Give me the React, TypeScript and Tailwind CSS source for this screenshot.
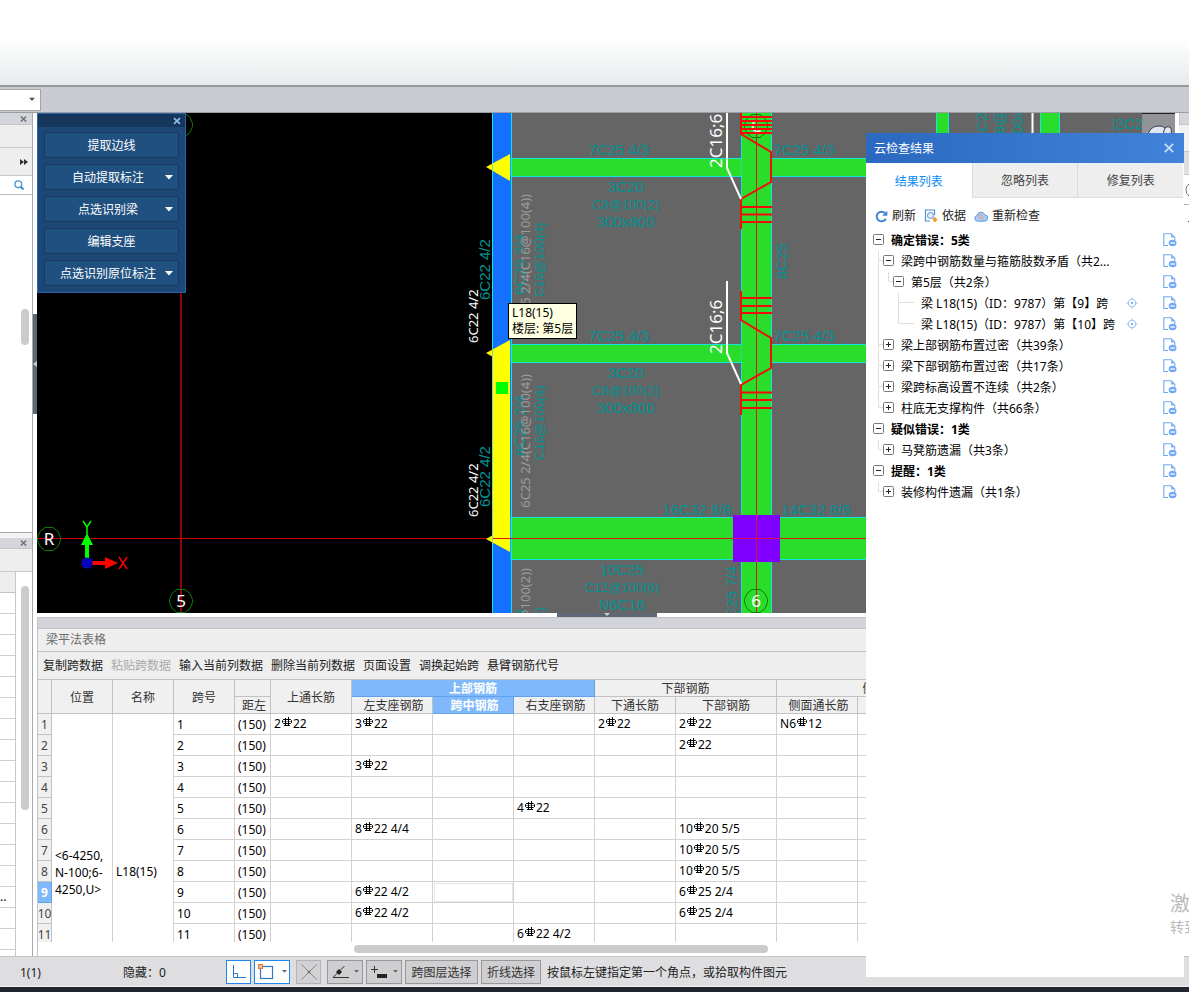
import React from "react";

const sans = "font-['Noto_Sans','Noto_Sans_CJK_SC',sans-serif]";

/* ---------- small icons ---------- */

function Caret({ className = "" }: { className?: string }) {
  return (
    <svg viewBox="0 0 8 5" className={"h-[5px] w-2 shrink-0 " + className} aria-hidden="true">
      <path d="M0 0h8L4 4.6z" fill="currentColor" />
    </svg>
  );
}

function Cross({ className = "" }: { className?: string }) {
  return (
    <svg viewBox="0 0 8 8" className={"h-2 w-2 " + className} aria-hidden="true">
      <path d="M1 1.2 7 6.8M7 1.2 1 6.8" stroke="currentColor" strokeWidth="1.7" fill="none" />
    </svg>
  );
}

function Rebar() {
  return (
    <svg viewBox="0 0 10 10" className="mx-px mb-px inline-block h-[10px] w-[10px] align-baseline" role="img" aria-label="HRB400">
      <g fill="none" stroke="#000" strokeWidth="1">
        <path d="M3.5 1v8M6.5 0v9M2.5 2.5h-1l-1 1v2l1 1h7l1-1v-2l-1-1h-7M2 8.5h6" />
        <path d="M1 4.5h8" strokeWidth="0.5" />
      </g>
    </svg>
  );
}

function FileMinus() {
  return (
    <svg viewBox="0 0 14 14" className="h-[14px] w-[14px]" aria-hidden="true">
      <path d="M5 12.5H.8V.8h7.4l3.6 3.4V7" fill="#fff" stroke="#6ea8f0" strokeWidth="1.1" />
      <path d="M8 1v3.4h3.6z" fill="#7fb1f5" />
      <ellipse cx="9.6" cy="10" rx="3.9" ry="3.2" fill="#6ea8f7" />
      <path d="M7.4 10h4.4" stroke="#fff" strokeWidth="1.3" />
    </svg>
  );
}

function Target() {
  return (
    <svg viewBox="0 0 12 12" className="h-3 w-3" aria-hidden="true">
      <circle cx="6" cy="6" r="3.7" fill="none" stroke="#9cc3f5" strokeWidth="1.1" />
      <circle cx="6" cy="6" r="1.2" fill="#7db0f0" />
      <path d="M6 .4v2.2M6 9.4v2.2M.4 6h2.2M9.4 6h2.2" stroke="#9cc3f5" strokeWidth="1.1" />
    </svg>
  );
}

/* ---------- drawing area ---------- */

function Cad({ x, y, t, up = false, mid = false, end = false, size = 15 }: { x: number; y: number; t: string; up?: boolean; mid?: boolean; end?: boolean; size?: number }) {
  return (
    <text
      x={x}
      y={y}
      fontSize={size}
      fill="#009393"
      textAnchor={mid ? "middle" : end ? "end" : "start"}
      transform={up ? `rotate(-90 ${x} ${y})` : undefined}
      className="font-['Liberation_Sans',sans-serif]"
    >
      {t}
    </text>
  );
}

function Note({ x, y, t, size, fill, end = false }: { x: number; y: number; t: string; size: number; fill: string; end?: boolean }) {
  return (
    <text x={x} y={y} fontSize={size} fill={fill} textAnchor={end ? "end" : "start"} transform={`rotate(-90 ${x} ${y})`} className={sans}>
      {t}
    </text>
  );
}

function Axis({ x, y, t }: { x: number; y: number; t: string }) {
  return (
    <g>
      <path
        d={`M${x - 4} ${y - 11.5}h8l5 4 2.500 6v3l-2.500 6-5 4h-8l-5-4-2.500-6v-3l2.500-6z`}
        fill="none"
        stroke="#0a7d0a"
      />
      <text x={x} y={y + 6} fontSize="17" fill="#fff" textAnchor="middle" className={sans}>
        {t}
      </text>
    </g>
  );
}

function Drawing() {
  const cyan = "#12e6dc";
  return (
    <svg viewBox="37 113 1138 500" preserveAspectRatio="xMinYMin slice" className="block h-full w-full" role="img" aria-label="梁平面图">
      <rect x="37" y="113" width="1138" height="500" fill="#000" />
      <rect x="511" y="113" width="664" height="500" fill="#656565" />
      <path d="M181 113v500" stroke="#8f0008" strokeWidth="2" />
      <path d="M37 538.500h460" stroke="#d40000" />
      <rect x="493" y="113" width="18" height="500" fill="#1470ff" />

      <g fill="#2bdd2b" stroke={cyan}>
        <rect x="511" y="158.500" width="680" height="18" />
        <rect x="511" y="344.500" width="680" height="18" />
        <rect x="511" y="517.500" width="680" height="42" />
        <rect x="741.500" y="100" width="30" height="530" />
        <rect x="936.500" y="100" width="12" height="60" />
        <rect x="1040.500" y="100" width="19" height="60" />
      </g>
      <g fill="#2bdd2b">
        <rect x="735" y="159" width="44" height="17" />
        <rect x="735" y="345" width="44" height="17" />
      </g>
      <path d="M741.500 150v35M771.500 150v35M741.500 336v35M771.500 336v35" stroke={cyan} opacity="0.5" />
      <path d="M1032.500 113v30" stroke="#fff" strokeWidth="2" />

      <path d="M492.500 113v500" stroke={cyan} />
      <path d="M511.500 113v500" stroke={cyan} />
      <g fill="#ffff00">
        <path d="M486 167l24-13v27z" />
        <path d="M486 353l24-13v212l-24-13 7-4V357z" />
      </g>
      <path d="M492.500 162v10M492.500 348v196" stroke="#86d8a8" />
      <rect x="496" y="382" width="12" height="12" fill="#00ff00" />

      <Cad x={619} y={155} t="7C25 4/3" mid />
      <Cad x={804} y={155} t="7C25 4/3" mid />
      <Cad x={626} y={192} t="3C20" mid />
      <Cad x={626} y={209} t="C8@100(2)" mid size={13} />
      <Cad x={626} y={227} t="300x800" mid />
      <Cad x={619} y={341} t="7C25 4/3" mid />
      <Cad x={804} y={341} t="7C25 4/3" mid />
      <Cad x={626} y={378} t="3C20" mid />
      <Cad x={626} y={395} t="C8@100(2)" mid size={13} />
      <Cad x={626} y={413} t="300x800" mid />
      <Cad x={697} y={515} t="16C32 8/8" mid />
      <Cad x={816} y={515} t="14C32 8/6" mid />
      <Cad x={622} y={575} t="10C25" mid />
      <Cad x={622} y={592} t="C12@100(6)" mid size={13} />
      <Cad x={622} y={610} t="N6C16" mid />
      <Cad x={787} y={279} t="8C25" up />
      <Cad x={490} y={300} t="6C22 4/2" up />
      <Cad x={490} y={507} t="6C22 4/2" up />
      <Cad x={525} y={295} t="6C25 2/4" up />
      <Cad x={544} y={297} t="C16@100(4)" up size={13} />
      <Cad x={525} y={456} t="6C25 2/4" up />
      <Cad x={544} y={460} t="C16@100(4)" up size={13} />
      <Cad x={525} y={609} t="6C25" up end />
      <Cad x={737} y={566} t="6C25 7/4" up end />
      <Cad x={544} y={607} t="C8@100(2)" up end size={13} />
      <Cad x={987} y={140} t="3C20" up />
      <Cad x={1005} y={145} t="C8@100" up />
      <Cad x={1023} y={142} t="300x8" up />
      <Cad x={1112} y={129} t="|2C25" />

      <path d="M756.500 113v500M493 538.500h680" stroke="#e01414" />
      <rect x="733" y="515" width="47" height="47" fill="#8000ff" />
      <path d="M756.500 513v52M733 538.500h47" stroke="#d8104e" />

      <Axis x={756} y={126} t="C" />
      <g fill="none" stroke="#f50a0a" strokeWidth="2">
        <path d="M741 113v21l30 18v30l-30 17v30M741 291v29l30 18v30l-30 17v30" />
        <path d="M741 117h31M741 121h31M741 125h31M741 129h31M741 133h31" />
        <path d="M741 207h31M741 214.500h31M741 222h31" />
        <path d="M741 298h31M741 306h31M741 313h31" />
        <path d="M741 392.500h31M741 400h31M741 408h31" />
      </g>
      <path d="M727 113v55l14 31M727 281v72l14 31" fill="none" stroke="#fff" strokeWidth="2" />

      <Note x={722} y={168} t="2C16;6" size={17} fill="#fff" />
      <Note x={722} y={354} t="2C16;6" size={17} fill="#fff" />
      <Note x={478} y={343} t="6C22 4/2" size={13} fill="#fff" />
      <Note x={478} y={517} t="6C22 4/2" size={13} fill="#fff" />
      <Note x={530} y={194} t="6C25 2/4(C16@100(4))" size={13} fill="#a29b9b" end />
      <Note x={530} y={374} t="6C25 2/4(C16@100(4))" size={13} fill="#a29b9b" end />
      <Note x={530} y={568} t="4C25(C8@100(2))" size={13} fill="#a29b9b" end />

      <Axis x={181} y={125} t="5" />
      <Axis x={49} y={539} t="R" />
      <Axis x={181} y={601} t="5" />
      <Axis x={756} y={601} t="6" />

      <path d="M85 562v-17h-4l6-12 6 12h-4v17z" fill="#00ff00" />
      <path d="M87 561h18v-4l13 6-13 6v-4H87z" fill="#ff0000" />
      <circle cx="87" cy="563" r="5.500" fill="#0000c0" />
      <path d="M83 521l4 6 4-6M87 527v7" fill="none" stroke="#00ff00" strokeWidth="1.500" />
      <path d="M119 557l8 12M127 557l-8 12" stroke="#ff0000" strokeWidth="1.500" />

      <rect x="1142" y="113" width="33" height="40" fill="#929397" />
      <path d="M1142 113.500h33" stroke="#222" />
      <path d="M1148 138q0-12 11-12 4 0 6 2 3-3 6 0 2 4-2 8" fill="#dfe6f0" stroke="#3b4350" />
      <path d="M1165 128q-3 4 0 8" fill="none" stroke="#3b4350" />
    </svg>
  );
}

function CommandButton({ label, menu = false }: { label: string; menu?: boolean }) {
  return (
    <button type="button" className="flex h-[26px] w-full items-center rounded-[2px] border border-[#17395f] bg-[#20507f] text-white">
      <span className={menu ? "flex-1 pl-[6px] pt-[2px] text-center" : "flex-1 pt-[2px] text-center"}>{label}</span>
      {menu && <Caret className="mr-[5px] text-white" />}
    </button>
  );
}

function CommandPanel() {
  return (
    <section className="absolute left-0 top-0 w-[149px] border border-[#2763a5] bg-[#1c4776]">
      <div className="flex h-[13px] items-center justify-end bg-[#16365b] pr-1">
        <button type="button" aria-label="关闭" className="text-[#8fc0ea]">
          <Cross />
        </button>
      </div>
      <div className="flex flex-col gap-[6px] px-[6px] pb-[6px] pt-[5px]">
        <CommandButton label="提取边线" />
        <CommandButton label="自动提取标注" menu />
        <CommandButton label="点选识别梁" menu />
        <CommandButton label="编辑支座" />
        <CommandButton label="点选识别原位标注" menu />
      </div>
    </section>
  );
}

/* ---------- left sidebar ---------- */

function Sidebar() {
  return (
    <aside className="flex w-[33px] shrink-0 flex-col gap-[5px] border-r border-[#a9a9ab] bg-[#f4f4f4]">
      <section className="relative flex h-[420px] flex-col border-b border-[#a9a9ab] bg-white">
        <div className="flex h-3 items-center justify-end border-b border-[#c3c5ca] bg-[#d4d6dc] pr-[5px] text-[#6f6f6f]">
          <button type="button" aria-label="关闭"><Cross className="w-[7px]" /></button>
        </div>
        <div className="h-[23px] border-b border-[#c8c8ca] bg-[#eeeeee]" />
        <div className="flex h-[28px] items-center justify-end border-b border-[#c8c8ca] bg-[#eeeeee] pr-1">
          <svg viewBox="0 0 8 6" className="h-[6px] w-2" aria-hidden="true">
            <path d="M0 0l4 3-4 3zM4 0l4 3-4 3z" fill="#333" />
          </svg>
        </div>
        <div className="flex h-[19px] items-center justify-end border-b border-[#b9b9bb] pr-2">
          <svg viewBox="0 0 10 10" className="h-[10px] w-[10px]" aria-hidden="true">
            <circle cx="4.300" cy="4.300" r="3.400" fill="none" stroke="#4a9ad4" strokeWidth="1.400" />
            <path d="M6.700 6.700 9.500 9.500" stroke="#2b7fc0" strokeWidth="1.800" />
          </svg>
        </div>
        <div className="ml-[21px] mt-[114px] h-[36px] w-2 rounded-full bg-[#cbcbcb]" />
      </section>
      <section className="flex min-h-0 flex-1 flex-col bg-white">
        <div className="flex h-[11px] items-center justify-end border-b border-[#c3c5ca] bg-[#d4d6dc] pr-[5px] text-[#6f6f6f]">
          <button type="button" aria-label="关闭"><Cross className="w-[7px]" /></button>
        </div>
        <div className="h-[23px] border-b border-[#c8c8ca] bg-[#eeeeee]" />
        <div className="flex min-h-0 flex-1 overflow-hidden">
          <div className="w-4 border-r border-[#c8c8c8]">
            <div className="h-[21px] border-b border-[#c4c4c4] bg-[#eeeeee]" />
            {Array.from({ length: 17 }, (_, i) => (
              <div key={i} className="h-[21px] border-b border-[#cfcfcf] text-[12px] leading-5">
                {i === 14 ? ".." : ""}
              </div>
            ))}
          </div>
          <div className="ml-[5px] mt-[14px] h-[224px] w-2 rounded-full bg-[#cbcbcb]" />
        </div>
      </section>
    </aside>
  );
}

/* ---------- beam table ---------- */

type Row = Partial<Record<"top" | "left" | "mid" | "right" | "low" | "bottom" | "side" | "side2" | "tie", [string, string]>>;

const cols: (keyof Row)[] = ["top", "left", "mid", "right", "low", "bottom", "side", "side2", "tie"];

const rows: Row[] = [
  { top: ["2", "22"], left: ["3", "22"], low: ["2", "22"], bottom: ["2", "22"], side: ["N6", "12"] },
  { bottom: ["2", "22"] },
  { left: ["3", "22"] },
  {},
  { right: ["4", "22"] },
  { left: ["8", "22 4/4"], bottom: ["10", "20 5/5"] },
  { bottom: ["10", "20 5/5"] },
  { bottom: ["10", "20 5/5"] },
  { left: ["6", "22 4/2"], bottom: ["6", "25 2/4"] },
  { left: ["6", "22 4/2"], bottom: ["6", "25 2/4"] },
  { right: ["6", "22 4/2"] },
  {},
  {},
  {},
  {},
];

const th = "border-b border-r border-[#c2c2c4] p-0 pt-px text-center font-normal leading-[15px] text-[#333]";
const thSub = th + " pl-[3px]";
const thOn = "border-b border-r border-[#62a2ea] bg-[#7fb9fb] p-0 pt-px text-center font-bold leading-[15px] text-white";
const tdBase = "border-b border-r border-[#d2d2d2] p-0 pl-[3px] text-left";
const td = tdBase + " pt-[2px]";

function BeamTable() {
  return (
    <table className="w-[959px] table-fixed border-separate border-spacing-0 text-[12px] leading-4 text-black">
      <colgroup>
        <col className="w-[14px]" />
        <col className="w-[61px]" />
        <col className="w-[61px]" />
        <col className="w-[61px]" />
        <col className="w-[36px]" />
        <col className="w-[81px]" />
        <col className="w-[81px]" />
        <col className="w-[81px]" />
        <col className="w-[81px]" />
        <col className="w-[81px]" />
        <col className="w-[101px]" />
        <col className="w-[81px]" />
        <col className="w-[81px]" />
        <col className="w-[58px]" />
      </colgroup>
      <thead className="bg-[#f0f0f0]">
        <tr className="h-[17px]">
          <th rowSpan={2} className={th} />
          <th rowSpan={2} className={th}>位置</th>
          <th rowSpan={2} className={th}>名称</th>
          <th rowSpan={2} className={th}>跨号</th>
          <th className={th} />
          <th rowSpan={2} className={th}>上通长筋</th>
          <th colSpan={3} className={thOn}>上部钢筋</th>
          <th colSpan={2} className={th}>下部钢筋</th>
          <th colSpan={3} className={th}>侧面钢筋</th>
        </tr>
        <tr className="h-[17px]">
          <th className={thSub}>距左</th>
          <th className={thSub}>左支座钢筋</th>
          <th className={thOn + " pl-[3px]"}>跨中钢筋</th>
          <th className={thSub}>右支座钢筋</th>
          <th className={th}>下通长筋</th>
          <th className={th}>下部钢筋</th>
          <th className={thSub}>侧面通长筋</th>
          <th className={th}>侧面原位</th>
          <th className={th}>拉筋</th>
        </tr>
      </thead>
      <tbody>
        {rows.map((row, i) => (
          <tr key={i} className="h-[21px]">
            <th className={i === 8 ? thOn : "border-b border-r border-[#c2c2c4] bg-[#f0f0f0] p-0 pt-[2px] text-center font-normal text-[#444]"}>
              <span className="flex justify-center">{i + 1}</span>
            </th>
            {i === 0 && (
              <>
                <td rowSpan={15} className={td + " leading-[17px]"}>
                  {"<6-4250,"}
                  <br />
                  N-100;6-
                  <br />
                  {"4250,U>"}
                </td>
                <td rowSpan={15} className={td}>L18(15)</td>
              </>
            )}
            <td className={td}>{i + 1}</td>
            <td className={td}>(150)</td>
            {cols.map((c) => {
              const v = row[c];
              const active = i === 8 && c === "mid";
              return (
                <td key={c} className={active ? tdBase + " outline outline-1 -outline-offset-2 outline-[#e6e6e6]" : tdBase}>
                  {v && (
                    <span className="whitespace-nowrap">
                      {v[0]}
                      <Rebar />
                      {v[1]}
                    </span>
                  )}
                </td>
              );
            })}
          </tr>
        ))}
      </tbody>
    </table>
  );
}

function TablePanel() {
  return (
    <section className="shrink-0 border-l border-[#c2c4c9] bg-white">
      <div className="h-3 border-b border-t border-[#c2c4c9] bg-[#d3d4da]" />
      <h2 className="flex h-[23px] items-center border-b border-[#c2c4c9] bg-[#eeeeee] pl-2 text-[#6b6b6b]">梁平法表格</h2>
      <div className="flex h-[28px] items-center gap-2 border-b border-[#c2c2c4] bg-[#eeeeee] pl-[5px] text-[#222]">
        <button type="button">复制跨数据</button>
        <button type="button" disabled className="text-[#aaaaaa]">粘贴跨数据</button>
        <button type="button">输入当前列数据</button>
        <button type="button">删除当前列数据</button>
        <button type="button">页面设置</button>
        <button type="button">调换起始跨</button>
        <button type="button">悬臂钢筋代号</button>
      </div>
      <div className="h-[262px] overflow-hidden">
        <BeamTable />
      </div>
      <div className="flex h-[14px] items-center">
        <div className="ml-[316px] h-2 w-[414px] rounded-full bg-[#cbcbcb]" />
      </div>
    </section>
  );
}

/* ---------- cloud check dialog ---------- */

type Guide = "v" | "t" | "l" | "";

type Node = { guides: Guide[]; kind: "open" | "shut" | "leaf"; text: string; bold?: boolean };

const nodes: Node[] = [
  { guides: [], kind: "open", text: "确定错误：5类", bold: true },
  { guides: ["t"], kind: "open", text: "梁跨中钢筋数量与箍筋肢数矛盾（共2..." },
  { guides: ["v", "l"], kind: "open", text: "第5层（共2条）" },
  { guides: ["v", "", "t"], kind: "leaf", text: "梁 L18(15)（ID：9787）第【9】跨" },
  { guides: ["v", "", "l"], kind: "leaf", text: "梁 L18(15)（ID：9787）第【10】跨" },
  { guides: ["t"], kind: "shut", text: "梁上部钢筋布置过密（共39条）" },
  { guides: ["t"], kind: "shut", text: "梁下部钢筋布置过密（共17条）" },
  { guides: ["t"], kind: "shut", text: "梁跨标高设置不连续（共2条）" },
  { guides: ["l"], kind: "shut", text: "柱底无支撑构件（共66条）" },
  { guides: [], kind: "open", text: "疑似错误：1类", bold: true },
  { guides: ["l"], kind: "shut", text: "马凳筋遗漏（共3条）" },
  { guides: [], kind: "open", text: "提醒：1类", bold: true },
  { guides: ["l"], kind: "shut", text: "装修构件遗漏（共1条）" },
];

function GuideLine({ g }: { g: Guide }) {
  const d = g === "v" ? "M5.500 0v21" : g === "t" ? "M5.500 0v21M5.500 9.500h4.500" : g === "l" ? "M5.500 0v9.500h4.500" : "";
  return (
    <svg viewBox="0 0 10 21" className="h-[21px] w-[10px] shrink-0" aria-hidden="true">
      <path d={d} fill="none" stroke="#dedede" />
    </svg>
  );
}

function TreeRow({ n }: { n: Node }) {
  return (
    <li className="flex h-[21px] items-center pl-[7px] pr-[7px]">
      {n.guides.map((g, i) => (
        <GuideLine key={i} g={g} />
      ))}
      {n.kind === "leaf" ? (
        <svg viewBox="0 0 11 21" className="h-[21px] w-[11px] shrink-0" aria-hidden="true">
          <path d="M0 9.500h11" stroke="#dedede" />
        </svg>
      ) : (
        <button type="button" aria-label={n.kind === "open" ? "折叠" : "展开"} className="mb-[2px] shrink-0">
          <svg viewBox="0 0 11 11" className="block h-[11px] w-[11px]" aria-hidden="true">
            <rect x="0.500" y="0.500" width="10" height="10" rx="1" fill="#fff" stroke="#777" />
            <path d={n.kind === "open" ? "M3 5.500h5" : "M3 5.500h5M5.500 3v5"} stroke="#222" />
          </svg>
        </button>
      )}
      <span className={"ml-[7px] flex-1 whitespace-nowrap" + (n.bold ? " font-bold" : "")}>{n.text}</span>
      {n.kind === "leaf" && (
        <button type="button" aria-label="定位" className="mb-[2px] mr-[25px]">
          <Target />
        </button>
      )}
      <button type="button" aria-label="忽略" className="mb-[2px]">
        <FileMinus />
      </button>
    </li>
  );
}

function CheckDialog() {
  return (
    <section className="absolute bottom-[15px] right-[5px] top-[133px] w-[318px] bg-white text-black">
      <header className="flex h-[30px] items-center justify-between bg-linear-to-r from-[#2a69bf] to-[#4283da] pl-2 pr-[10px] text-white">
        <h2 className="pt-[2px]">云检查结果</h2>
        <button type="button" aria-label="关闭" className="text-[#c4dcf8]">
          <svg viewBox="0 0 10 10" className="h-[10px] w-[10px]" aria-hidden="true">
            <path d="M.8.8l8.400 8.400M9.200.8.800 9.200" stroke="currentColor" strokeWidth="1.800" />
          </svg>
        </button>
      </header>
      <nav className="grid h-[35px] grid-cols-3 pr-px">
        <button type="button" className="bg-white pt-[2px] text-[#0a8cf5]">结果列表</button>
        <button type="button" className="border-b border-l border-[#dcdcdc] bg-[#eeeeee] pt-[2px] text-[#444]">忽略列表</button>
        <button type="button" className="border-b border-l border-[#dcdcdc] bg-[#eeeeee] pt-[2px] text-[#444]">修复列表</button>
      </nav>
      <div className="flex h-[32px] items-center gap-2 pl-[9px] pt-1 text-[#222]">
        <button type="button" className="flex items-center gap-1">
          <svg viewBox="0 0 13 13" className="h-[13px] w-[13px]" aria-hidden="true">
            <path d="M10.800 8.700A4.800 4.800 0 1 1 10 3.200" fill="none" stroke="#3f86d2" strokeWidth="2" />
            <path d="M12.300.8v5H7.200z" fill="#3f86d2" />
          </svg>
          刷新
        </button>
        <button type="button" className="flex items-center gap-1">
          <svg viewBox="0 0 14 14" className="h-[14px] w-[14px]" aria-hidden="true">
            <path d="M6 12H1.500V1h9v5" fill="#fff" stroke="#4f90dc" strokeWidth="1.200" />
            <circle cx="6.500" cy="6.500" r="3" fill="#e4effc" stroke="#5b8fd0" />
            <path d="M8.500 8.500l2 1.500" stroke="#5b8fd0" />
            <path d="M11 8l2.500 2.500L11 13.500 8.500 10.800z" fill="#f59a23" />
          </svg>
          依据
        </button>
        <button type="button" className="flex items-center gap-1">
          <svg viewBox="0 0 14 11" className="h-[11px] w-[14px]" aria-hidden="true">
            <path d="M3.500 10.200A2.900 2.900 0 0 1 3 4.500 4 4 0 0 1 10.700 3.800a3.200 3.200 0 0 1-.4 6.400z" fill="#a9cdf6" stroke="#5d98e0" />
            <circle cx="6.500" cy="5.500" r="1.800" fill="none" stroke="#ec9b6a" />
            <path d="M8 7l2 2" stroke="#ec9b6a" />
          </svg>
          重新检查
        </button>
      </div>
      <ul>
        {nodes.map((n) => (
          <TreeRow key={n.text} n={n} />
        ))}
      </ul>
    </section>
  );
}

/* ---------- status bar ---------- */

function StatusBar() {
  const plain = "flex h-6 items-center justify-center border border-[#98989a] bg-[#cfcfd1] text-[#333]";
  const on = "flex h-6 items-center justify-center border border-[#1e88f0] bg-white text-[#666]";
  return (
    <footer className="shrink-0">
      <div className="flex h-[31px] items-center border-b border-t border-[#c4c6c4] border-b-[#f4f4f4] bg-[#dedee1] text-[#222]">
        <span className="ml-5 w-[103px] pt-[2px]">1(1)</span>
        <span className="w-[103px] pt-[2px]">隐藏：0</span>
        <div className="flex items-center gap-[3px]">
          <button type="button" aria-label="正交" className={on + " w-[25px]"}>
            <svg viewBox="0 0 14 14" className="h-[14px] w-[14px]" aria-hidden="true">
              <path d="M1.500 0v12.500H14M1.500 8.500h4v4" fill="none" stroke="#2f78c8" />
            </svg>
          </button>
          <button type="button" aria-label="对象捕捉" className={on + " w-[36px] gap-2"}>
            <svg viewBox="0 0 16 16" className="h-4 w-4" aria-hidden="true">
              <rect x="2.500" y="2.500" width="12" height="12" fill="none" stroke="#2f78c8" strokeWidth="1.200" />
              <rect x="0.500" y="0.500" width="4" height="4" fill="#f7b48c" stroke="#e87a30" />
            </svg>
            <Caret className="w-[5px]" />
          </button>
        </div>
        <button type="button" aria-label="交点" className="ml-[6px] flex h-6 w-[25px] items-center justify-center border border-[#b4b4b6] bg-[#d2d2d4]">
          <svg viewBox="0 0 16 16" className="h-4 w-4" aria-hidden="true">
            <path d="M.5.5l15 15M15.500.5l-15 15" stroke="#888" />
            <circle cx="8" cy="8" r="1.500" fill="#777" />
          </svg>
        </button>
        <div className="ml-[6px] flex items-center gap-[3px]">
          <button type="button" aria-label="角度" className={plain + " w-[36px] gap-[5px]"}>
            <svg viewBox="0 0 17 12" className="h-3 w-[17px]" aria-hidden="true">
              <path d="M12.500 0 1 11.500h16" fill="none" stroke="#333" />
              <path d="M7 3l3 3-3 3-3-3z" fill="#222" />
            </svg>
            <Caret className="w-[5px] text-[#666]" />
          </button>
          <button type="button" aria-label="动态输入" className={plain + " w-[36px] gap-[5px]"}>
            <svg viewBox="0 0 17 12" className="h-3 w-[17px]" aria-hidden="true">
              <path d="M3.500 0v7M0 3.500h7" stroke="#333" />
              <rect x="6" y="8" width="10" height="4" fill="#222" />
            </svg>
            <Caret className="w-[5px] text-[#666]" />
          </button>
          <button type="button" className={plain + " w-[73px] whitespace-nowrap pt-[2px]"}>跨图层选择</button>
          <button type="button" className={plain + " w-[60px] whitespace-nowrap pt-[2px]"}>折线选择</button>
        </div>
        <span className="ml-[6px] whitespace-nowrap pt-[2px]">按鼠标左键指定第一个角点，或拾取构件图元</span>
      </div>
      <div className="h-[5px] bg-[#21252f]" />
    </footer>
  );
}

/* ---------- page ---------- */

export default function App() {
  return (
    <div className={"relative flex h-screen min-h-[992px] flex-col overflow-hidden bg-white text-[12px] leading-4 " + sans}>
      <header className="h-[87px] shrink-0 border-b-2 border-[#96999b] bg-linear-to-b from-white from-45% to-[#e6ebeb]" />
      <div className="flex h-[26px] shrink-0 items-center border-b border-[#9c9ea3] bg-[#c9cbd0]">
        <button type="button" aria-label="楼层" className="flex h-[22px] w-[41px] items-center justify-end border border-l-0 border-[#a3a5a9] bg-white pr-[5px] text-[#555]">
          <Caret className="w-[6px]" />
        </button>
      </div>

      <main className="flex min-h-0 flex-1">
        <Sidebar />
        <div className="flex w-1 shrink-0 bg-white pt-[201px]">
          <div className="flex h-[100px] w-1 items-center bg-[#5f6874]">
            <svg viewBox="0 0 4 6" className="h-[6px] w-1" aria-hidden="true">
              <path d="M4 0v6L0 3z" fill="#c8ccd2" />
            </svg>
          </div>
        </div>
        <div className="flex min-w-0 flex-1 flex-col">
          <div className="relative min-h-0 flex-1 overflow-hidden bg-black">
            <Drawing />
            <CommandPanel />
            <div role="tooltip" className="absolute left-[471px] top-[190px] border border-black bg-[#ffffe1] px-[3px] py-px text-black">
              <div>L18(15)</div>
              <div>楼层: 第5层</div>
            </div>
          </div>
          <div className="h-1 shrink-0 bg-white pl-[520px]">
            <div className="flex h-1 w-[100px] justify-center bg-[#5f6874]">
              <svg viewBox="0 0 6 3" className="h-[3px] w-[6px]" aria-hidden="true">
                <path d="M0 0h6L3 3z" fill="#c8ccd2" />
              </svg>
            </div>
          </div>
          <TablePanel />
        </div>
        <aside className="flex w-[14px] shrink-0 flex-col border-l-4 border-white bg-white">
          <div className="h-3 border-b border-l border-[#c3c5ca] bg-[#d4d6dc]" />
          <div className="h-[27px] border-b border-[#c3c5ca] bg-[#f2f2f2]" />
          <div className="h-[23px] border-b border-[#c3c5ca] bg-[#dfdfdf]" />
          <div className="flex h-[30px] justify-end overflow-hidden border-b border-[#b5b5b7]">
            <svg viewBox="0 0 4 14" className="mt-2 h-[14px] w-1" aria-hidden="true">
              <path d="M4 1Q1 3 1 7t3 6" fill="none" stroke="#777" />
            </svg>
          </div>
          <div className="mt-4 h-px w-px self-end bg-[#444]" />
        </aside>
      </main>

      <StatusBar />
      <CheckDialog />
      <div className="absolute bottom-[55px] right-0 w-[19px] overflow-hidden whitespace-nowrap text-[#b9b9b9]">
        <div className="text-[20px] leading-[26px]">激活</div>
        <div className="text-[14px] leading-5">转到</div>
      </div>
    </div>
  );
}
